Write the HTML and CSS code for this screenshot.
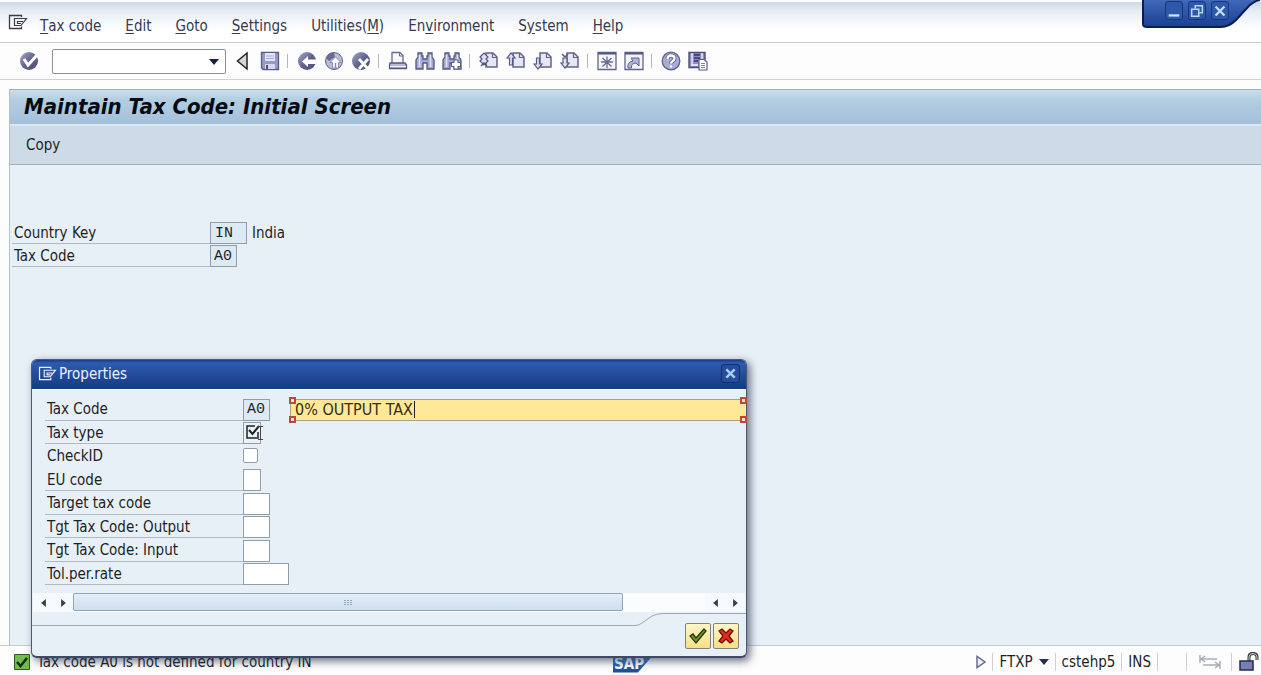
FILE: index.html
```html
<!DOCTYPE html>
<html lang="en">
<head>
    <meta charset="UTF-8">
    <meta name="viewport" content="width=device-width, initial-scale=1.0">
    <title>Maintain Tax Code: Initial Screen</title>
    <link rel="stylesheet" href="styles.css">
</head>
<body>
    <!-- shared shapes -->
    <svg class="defs" aria-hidden="true">
        <defs>
            <linearGradient id="ball" x1="0" y1="0" x2="1" y2="1">
                <stop offset="0" stop-color="#a9abd0"/>
                <stop offset="0.5" stop-color="#62648f"/>
                <stop offset="1" stop-color="#4b4c74"/>
            </linearGradient>
            <symbol id="session" viewBox="0 0 20 16">
                <path d="M13.500 3V1.500H1.500V14.500H13.500V12.500" fill="none" stroke="currentColor" stroke-width="1.300"/>
                <path d="M6.500 4.500H18.500L14.500 9.500L13 11.500H6.500ZM15 7.500H9.500V9.500H13" fill="none" stroke="currentColor" stroke-width="1.200"/>
            </symbol>
            <symbol id="page" viewBox="0 0 20 20">
                <path d="M7 2H14L18 6V16H7Z" fill="#e6e7f6" stroke="#62648c" stroke-width="1.500"/>
                <path d="M13.500 2V6.500H18" fill="none" stroke="#62648c" stroke-width="1.200"/>
            </symbol>
            <symbol id="binoculars" viewBox="0 0 20 20">
                <path d="M3 2H7V5H8V8H12V5H13V2H17V6L19 9V18H12V12H8V18H1V9L3 6Z" fill="#a4a8d4" stroke="#55577f" stroke-width="1.300"/>
                <path d="M4.500 4V16M15.500 4V16" stroke="#e4e5f6" stroke-width="1.500"/>
            </symbol>
        </defs>
    </svg>

    <!-- ============ menu ============ -->
    <nav class="menu-bar">
        <button class="menu-session" aria-label="Session"><svg width="20" height="16"><use href="#session"/></svg></button>
        <button><u>T</u>ax code</button>
        <button><u>E</u>dit</button>
        <button><u>G</u>oto</button>
        <button><u>S</u>ettings</button>
        <button>Utilities(<u>M</u>)</button>
        <button>En<u>v</u>ironment</button>
        <button>S<u>y</u>stem</button>
        <button><u>H</u>elp</button>
    </nav>

    <div class="window-controls">
        <svg class="window-tab" viewBox="0 0 120 29" aria-hidden="true">
            <defs>
                <linearGradient id="tab" x1="0" y1="0" x2="0" y2="1">
                    <stop offset="0" stop-color="#3f68b8"/>
                    <stop offset="1" stop-color="#1a3f94"/>
                </linearGradient>
            </defs>
            <path d="M2 0V24Q2 27 6 27H80Q88 27 95 20L106 8Q112 1 119 0Z" fill="url(#tab)"/>
            <path d="M2 0V24Q2 27 6 27H80Q88 27 95 20L106 8Q112 1 119 0" fill="none" stroke="#0b1d52" stroke-width="2"/>
        </svg>
        <button aria-label="Minimize"><svg viewBox="0 0 18 18"><path d="M3 14H15" stroke="#d3e4ff" stroke-width="2.500"/></svg></button>
        <button aria-label="Restore"><svg viewBox="0 0 18 18"><path d="M7 6V3H15V11H12M3 7H11V15H3Z" fill="none" stroke="#bcd5fb" stroke-width="1.700"/></svg></button>
        <button aria-label="Close"><svg viewBox="0 0 18 18"><path d="M4 4L14 14M14 4L4 14" stroke="#c8defd" stroke-width="2.500"/></svg></button>
    </div>

    <!-- ============ system toolbar ============ -->
    <div class="toolbar">
        <button aria-label="Enter"><svg viewBox="0 0 20 20"><circle cx="10" cy="10" r="9" fill="url(#ball)"/><path d="M5 8L9 14L19 3" fill="none" stroke="#fff" stroke-width="3"/></svg></button>
        <div class="command">
            <select aria-label="Command"><option></option></select>
            <svg width="10" height="6" viewBox="0 0 10 6"><path d="M0 0H10L5 6Z" fill="#17213f"/></svg>
        </div>
        <button aria-label="Collapse"><svg viewBox="0 0 20 20"><path d="M14 2V18L4.500 10Z" fill="#d8d8dc" stroke="#222" stroke-width="1.500"/></svg></button>
        <button aria-label="Save"><svg viewBox="0 0 20 20"><path d="M1.500 1.500H18.500V18.500H3L1.500 17Z" fill="#9599c8" stroke="#5a5c88" stroke-width="1.300"/><path d="M5 2H15V10H5Z" fill="#e4e6f8"/><path d="M6 5H14M6 7.500H14" stroke="#a8abd2"/><path d="M5 13H15V18H5Z" fill="#d6d8ef"/><path d="M7 14V18" stroke="#4d4f7b" stroke-width="2"/></svg></button>
        <span class="sep"></span>
        <button aria-label="Back"><svg viewBox="0 0 20 20"><circle cx="10" cy="10" r="9" fill="url(#ball)"/><path d="M5 10.500L11 5V8.500H19V13H11V16Z" fill="#fff"/></svg></button>
        <button aria-label="Exit"><svg viewBox="0 0 20 20"><circle cx="10" cy="10" r="8.500" fill="#b9bbdc" stroke="#606289"/><path d="M2 7Q5 1 10 2L11 6L5 10Z" fill="#696b96"/><path d="M11.500 6L17 11.500H14.500V17H8.500V11.500H6Z" fill="#fff" stroke="#777aa4" stroke-width="0.800"/><path d="M11.500 17V12" stroke="#8588b4" stroke-width="1.500"/></svg></button>
        <button aria-label="Cancel"><svg viewBox="0 0 20 20"><circle cx="10" cy="10" r="9" fill="url(#ball)"/><path d="M8 8L17 18M17 8L8 18" stroke="#fff" stroke-width="2.800"/></svg></button>
        <span class="sep"></span>
        <button aria-label="Print"><svg viewBox="0 0 20 20"><path d="M4 12V1.500H12L15 4.500V12" fill="#f7f7fc" stroke="#686a91" stroke-width="1.300"/><path d="M11.500 1.500V5H15" fill="none" stroke="#686a91"/><path d="M2 12H17L18.500 14V17.500H1.500V14Z" fill="#b6b8dc" stroke="#55577f" stroke-width="1.300"/><path d="M2 15.500H18" stroke="#f3f3fb"/></svg></button>
        <button aria-label="Find"><svg viewBox="0 0 20 20"><use href="#binoculars"/></svg></button>
        <button aria-label="Find next"><svg viewBox="0 0 20 20"><use href="#binoculars"/><path d="M14 8.500V18.500M9 13.500H19" stroke="#5b5d87" stroke-width="5"/><path d="M14 9.500V17.500M10 13.500H18" stroke="#fff" stroke-width="3"/></svg></button>
        <span class="sep"></span>
        <button aria-label="First page"><svg viewBox="0 0 20 20"><use href="#page"/><path d="M1 6L5 2L9 6L7 8L9 10L5 14L1 10L3 8Z" fill="#dddff3" stroke="#55577f" stroke-width="1.200"/><path d="M2 15L5 12L8 15" fill="none" stroke="#55577f" stroke-width="1.500"/></svg></button>
        <button aria-label="Previous page"><svg viewBox="0 0 20 20"><use href="#page"/><path d="M1 7L5 2L9 7H6.500V14H3.500V7Z" fill="#dddff3" stroke="#55577f" stroke-width="1.200"/></svg></button>
        <button aria-label="Next page"><svg viewBox="0 0 20 20"><use href="#page"/><path d="M1 13L5 18L9 13H6.500V7H3.500V13Z" fill="#dddff3" stroke="#55577f" stroke-width="1.200"/></svg></button>
        <button aria-label="Last page"><svg viewBox="0 0 20 20"><use href="#page"/><path d="M2 3L5 6L8 3" fill="none" stroke="#55577f" stroke-width="1.500"/><path d="M3 7H7V12H9L5 17L1 12H3Z" fill="#dddff3" stroke="#55577f" stroke-width="1.200"/></svg></button>
        <span class="sep"></span>
        <button aria-label="New session"><svg viewBox="0 0 20 20"><path d="M1 1.500H19V18.500H1Z" fill="#f4f4fb" stroke="#62648b" stroke-width="1.300"/><path d="M1 2.500H19" stroke="#55577f" stroke-width="2"/><path d="M10 5.500V17M4 11H16M5.500 7L14.500 15.500M14.500 7L5.500 15.500" stroke="#686b9a" stroke-width="1.300"/></svg></button>
        <button aria-label="Create shortcut"><svg viewBox="0 0 20 20"><path d="M1 1.500H19V18.500H1Z" fill="#f4f4fb" stroke="#62648b" stroke-width="1.300"/><path d="M1 2.500H19" stroke="#55577f" stroke-width="2"/><path d="M4 17Q3 11 9 10L7 7H15V15L12 12Q7 12 7.500 17Z" fill="#b0b3da" stroke="#5f628e"/></svg></button>
        <span class="sep"></span>
        <button aria-label="Help"><svg viewBox="0 0 20 20"><circle cx="10" cy="10" r="8.800" fill="#a9acd6" stroke="#5e608a" stroke-width="1.300"/><path d="M6.500 8Q6.500 4.500 10 4.500Q13.500 4.500 13.500 7.500Q13.500 9 11.500 10.200Q10 11 10 12.500" fill="none" stroke="#5e608a" stroke-width="4"/><path d="M6.500 8Q6.500 4.500 10 4.500Q13.500 4.500 13.500 7.500Q13.500 9 11.500 10.200Q10 11 10 12.500M10 14.500V16.500" fill="none" stroke="#fff" stroke-width="2.300"/></svg></button>
        <button aria-label="Customize layout"><svg viewBox="0 0 20 20"><path d="M1 1.500H17V16.500H1Z" fill="#8c90c5" stroke="#494b75" stroke-width="1.400"/><path d="M4 2V13M14 2V8" stroke="#e4e5f5" stroke-width="1.500"/><path d="M6 4H12M6 7H12M6 10H10" stroke="#484a79" stroke-width="2"/><path d="M3 14H10" stroke="#dfe1f4" stroke-width="2"/><path d="M11 8.500H16L19 11V19H11Z" fill="#fff" stroke="#5b5d83" stroke-width="1.200"/><path d="M13 12.500H17M13 14.500H17M13 16.500H17" stroke="#7f83ae"/></svg></button>
    </div>

    <!-- ============ work area ============ -->
    <main class="workspace">
        <h1>Maintain Tax Code: Initial Screen</h1>
        <div class="app-toolbar"><button>Copy</button></div>
        <form class="entry">
            <div class="row">
                <label for="country">Country Key</label>
                <input id="country" class="code size-3" value="IN" readonly>
                <span class="hint">India</span>
            </div>
            <div class="row">
                <label for="taxcode">Tax Code</label>
                <input id="taxcode" class="code size-2" value="A0" readonly>
            </div>
        </form>
    </main>

    <!-- ============ status bar ============ -->
    <footer class="status-bar">
        <svg width="16" height="16" viewBox="0 0 16 16"><path d="M0.500 0.500H15.500V15.500H0.500Z" fill="#70bd4a" stroke="#2c5925"/><path d="M3 8L6.500 12L13 4" fill="none" stroke="#123015" stroke-width="2.500"/></svg>
        <span class="message">Tax code A0 is not defined for country IN</span>
        <span class="logo">SAP</span>
        <div class="system-info">
            <button aria-label="Show fields"><svg width="10" height="14" viewBox="0 0 10 14"><path d="M1 1.500V12.500L9 7Z" fill="#eef1f8" stroke="#626d8b" stroke-width="1.500"/></svg></button>
            <button class="cell">FTXP <svg width="10" height="6" viewBox="0 0 10 6"><path d="M0 0H10L5 6Z" fill="#26304f"/></svg></button>
            <span class="cell">cstehp5</span>
            <span class="cell">INS</span>
            <span class="cell blank"></span>
            <span class="cell wide"><svg width="22" height="16" viewBox="0 0 22 16"><path d="M1 1V9M2 5H18M6 2L2 5L6 8M21 7V15M4 11H20M16 8L20 11L16 14" fill="none" stroke="#a9adb5" stroke-width="1.500"/></svg></span>
            <span class="cell lock"><svg width="20" height="20" viewBox="0 0 20 20"><path d="M10 9V5Q10 1.500 14 1.500Q18 1.500 18 5V8" fill="none" stroke="#35363e" stroke-width="3"/><path d="M10 9V5Q10 1.500 14 1.500Q18 1.500 18 5V8" fill="none" stroke="#c9cad4"/><path d="M1 9H14V18H1Z" fill="#777cba" stroke="#282b43" stroke-width="1.500"/></svg></span>
        </div>
    </footer>

    <!-- ============ properties popup ============ -->
    <section class="dialog" role="dialog" aria-labelledby="dialog-title">
        <header>
            <svg width="19" height="15"><use href="#session"/></svg>
            <h2 id="dialog-title">Properties</h2>
            <button aria-label="Close dialog"><svg viewBox="0 0 18 18"><path d="M4 4L14 14M14 4L4 14" stroke="#a9ccff" stroke-width="3"/></svg></button>
        </header>
        <form class="properties">
            <div class="row">
                <label for="p-code">Tax Code</label>
                <input id="p-code" class="code size-2" value="A0" readonly>
                <div class="description">
                    <input aria-label="Description" value="0% OUTPUT TAX">
                    <i class="handle top left"></i><i class="handle top right"></i>
                    <i class="handle bottom left"></i><i class="handle bottom right"></i>
                    <i class="caret"></i>
                </div>
            </div>
            <div class="row">
                <label for="p-type">Tax type</label>
                <div class="required">
                    <input id="p-type" class="size-1">
                    <svg width="20" height="18" viewBox="0 0 20 18"><path d="M14 9V15H3V3H11" fill="none" stroke="#222" stroke-width="1.500"/><path d="M5 7L8.500 11L15 3" fill="none" stroke="#222" stroke-width="2"/><path d="M14 3.500H19M16.500 4V16M14 16.500H19" stroke="#444" fill="none"/></svg>
                </div>
            </div>
            <div class="row plain">
                <label for="p-check">CheckID</label>
                <input id="p-check" type="checkbox">
            </div>
            <div class="row">
                <label for="p-eu">EU code</label>
                <input id="p-eu" class="size-1">
            </div>
            <div class="row">
                <label for="p-target">Target tax code</label>
                <input id="p-target" class="size-2">
            </div>
            <div class="row">
                <label for="p-output">Tgt Tax Code: Output</label>
                <input id="p-output" class="size-2">
            </div>
            <div class="row">
                <label for="p-input">Tgt Tax Code: Input</label>
                <input id="p-input" class="size-2">
            </div>
            <div class="row">
                <label for="p-tol">Tol.per.rate</label>
                <input id="p-tol" class="size-4">
            </div>
        </form>
        <div class="scroller">
            <button aria-label="Scroll left"><svg viewBox="0 0 6 10"><path d="M6 0V10L0 5Z"/></svg></button>
            <button aria-label="Scroll right"><svg viewBox="0 0 6 10"><path d="M0 0V10L6 5Z"/></svg></button>
            <div class="track"><div class="thumb"><svg width="8" height="5" viewBox="0 0 8 5"><path d="M0 0.500H2M3 0.500H5M6 0.500H8M0 2.500H2M3 2.500H5M6 2.500H8M0 4.500H2M3 4.500H5M6 4.500H8" stroke="#98a8ba"/></svg></div></div>
            <button aria-label="Scroll left"><svg viewBox="0 0 6 10"><path d="M6 0V10L0 5Z"/></svg></button>
            <button aria-label="Scroll right"><svg viewBox="0 0 6 10"><path d="M0 0V10L6 5Z"/></svg></button>
        </div>
        <div class="actions">
            <div class="edge"></div>
            <svg class="curve" width="26" height="13" viewBox="0 0 26 13"><path d="M0 12.500Q3 12 6 10L16 3Q20 1 26 0.500" fill="none" stroke="#a0a9b2"/></svg>
            <div class="buttons">
                <button aria-label="Continue"><svg viewBox="0 0 18 18"><path d="M1 9L4 7L7 11L15 2L17 4L7 16Z" fill="#6d9430" stroke="#263610" stroke-width="1.300"/></svg></button>
                <button aria-label="Cancel"><svg viewBox="0 0 18 18"><path d="M2 4L5 2L9 6L13 2L16 4L12 9L16 14L13 16L9 12L5 16L2 14L6 9Z" fill="#e52b20" stroke="#66150f" stroke-width="1.300"/></svg></button>
            </div>
        </div>
    </section>
</body>
</html>
```
FILE: styles.css
```css
* { margin: 0; padding: 0; box-sizing: border-box; }
body { display: flex; flex-direction: column; min-height: 100vh; position: relative; overflow: hidden; background: #fdfdfe; color: #1c1f24; font-family: "DejaVu Sans Condensed", "Noto Sans", sans-serif; font-size: 15px; line-height: 20px; }
button, input, select { font: inherit; color: inherit; }
button { display: flex; align-items: center; justify-content: center; background: none; border: 0; }
input, select { appearance: none; border: 1px solid #9aa3ac; border-radius: 0; background: #fff; outline: 0; }
svg { display: block; flex: none; }
.defs { position: absolute; width: 0; height: 0; }

/* menu */
.menu-bar { display: flex; align-items: center; gap: 24px; height: 43px; padding: 8px 8px 0; border-top: 2px solid #fff; border-bottom: 1px solid #c9cbcf; background: linear-gradient(#cdd9e8, #e8eef6 10px, #fff 28px); color: #343a50; }
.menu-bar u { text-underline-offset: 2px; }
.menu-session { margin-right: -12px; color: #3b3c45; align-self: flex-start; padding-top: 4px; }

.window-controls { position: absolute; top: 0; right: 0; width: 120px; height: 29px; display: flex; gap: 5px; padding: 1px 0 0 24px; }
.window-tab { position: absolute; top: 0; left: 0; width: 120px; height: 29px; }
.window-controls button { position: relative; width: 18px; height: 19px; border: 1px solid #173778; border-radius: 3px; background: #2e58aa; }
.window-controls button svg { width: 16px; height: 16px; }

/* toolbar */
.toolbar { display: flex; align-items: center; gap: 7px; height: 37px; padding-left: 19px; border-bottom: 1px solid #cfd1d5; background: #fdfdfe; }
.toolbar button svg { width: 20px; height: 20px; }
.command { position: relative; width: 174px; height: 25px; margin-left: 6px; }
.command select { width: 100%; height: 100%; border-color: #8b8f98; border-radius: 2px; }
.command svg { position: absolute; right: 7px; top: 10px; }
.sep { width: 3px; height: 14px; border-left: 1px solid #b4b6be; }

/* work area */
.workspace { flex: 1; margin: 9px 0 0 9px; border-left: 1px solid #b4c2d0; background: #e8f0f7; }
h1 { height: 37px; padding-left: 14px; border-top: 1px solid #9aaebf; border-bottom: 2px solid #dbe7f1; background: linear-gradient(#cbdeea, #b3cee1 10px, #a4bfda); color: #060b12; font-size: 22px; font-style: italic; font-weight: bold; line-height: 34px; }
.app-toolbar { display: flex; align-items: center; height: 39px; padding-left: 16px; border-bottom: 1px solid #9fb0c1; background: #cddae7; }
.entry { padding: 56px 0 0 2px; }
.row { display: flex; align-items: stretch; height: 23px; }
.row label { width: 198px; padding-left: 2px; border-bottom: 1px solid #b1bac3; line-height: 24px; white-space: nowrap; }
.row input { height: 22px; align-self: flex-end; padding-left: 4px; border-color: #929da8; }
.row .code { background: #dde9f4; font-family: "Liberation Mono", monospace; font-size: 15px; }
.row .size-1 { width: 18px; }
.row .size-2 { width: 27px; padding-left: 3px; }
.row .size-3 { width: 37px; }
.row .size-4 { width: 46px; }
.hint { padding-left: 5px; line-height: 24px; }

/* status bar */
.status-bar { display: flex; align-items: center; height: 30px; padding: 3px 0 0 14px; border-top: 1px solid #c2cbd5; }
.message { flex: none; width: 583px; padding-left: 7px; }
.logo { width: 40px; height: 17px; margin-top: 4px; padding-left: 1px; background: linear-gradient(#3a85c9, #124b94); clip-path: polygon(0 0, 100% 0, 62% 100%, 0 100%); color: #fff; font-size: 15px; font-weight: bold; line-height: 17px; }
.system-info { display: flex; align-items: center; margin-left: auto; }
.cell { display: flex; align-items: center; height: 18px; margin-left: 6px; padding-left: 6px; border-left: 1px solid #cdd0d6; }
.cell svg { margin-left: 6px; }
.blank { width: 29px; }
.wide { width: 45px; margin-left: 0; }
.lock { width: 30px; margin-left: 0; padding-left: 1px; }

/* popup */
.dialog { position: absolute; left: 31px; top: 359px; width: 716px; border: 1px solid #4d5874; border-bottom: 2px solid #3e4965; border-radius: 6px; background: #e8f0f7; box-shadow: 3px 3px 8px rgba(40, 50, 75, 0.7); }
.dialog header { display: flex; align-items: center; gap: 2px; height: 29px; padding: 0 6px 2px; border-radius: 5px 5px 0 0; background: linear-gradient(#173d85, #2d5baf 3px, #274f9f 12px, #163a82); color: #eaf1ff; }
h2 { flex: 1; font-size: 15px; font-weight: normal; }
.dialog header button { width: 19px; height: 19px; border: 1px solid #10306f; border-radius: 3px; background: #254d9b; }
.dialog header button svg { width: 15px; height: 15px; }
.properties { display: grid; grid-template-rows: repeat(8, minmax(0, 1fr)); height: 200px; padding: 7px 0 4px 13px; border-top: 1px solid #fff; }
.properties .row { height: auto; }
.description { position: relative; flex: 1; display: flex; margin-left: 20px; }
.description input { width: 100%; border-color: #a7a385; border-right: 0; background: #ffe998; color: #352e12; font-size: 16px; }
.handle { position: absolute; width: 7px; height: 7px; border: 2px solid #c0453a; background: #fbe4d8; }
.top { top: 0; }
.bottom { bottom: -2px; }
.left { left: -1px; }
.right { right: -1px; }
.caret { position: absolute; left: 124px; top: 4px; width: 1px; height: 17px; background: #222; }
.required { position: relative; display: flex; }
.required svg { position: absolute; left: 1px; top: 2px; }
.required input { background: #edf2f8; }
.row input[type="checkbox"] { width: 15px; height: 15px; align-self: center; border-radius: 2px; }
.plain label { border-bottom-color: transparent; }

.scroller { display: flex; height: 19px; margin: 4px 1px 1px; background: #f7fafd; }
.scroller button { width: 20px; }
.scroller button svg { width: 5px; height: 8px; fill: #36404d; }
.track { flex: 1; padding-right: 82px; background: #fbfcfe; }
.thumb { display: flex; align-items: center; justify-content: center; height: 18px; border: 1px solid #91a4b5; border-radius: 2px; background: linear-gradient(#e3eef8, #cedff0); }
.actions { display: flex; height: 43px; }
.edge { flex: 1; margin-top: 12px; border-top: 1px solid #a0a9b2; }
.buttons { display: flex; gap: 2px; width: 84px; padding: 9px 0 0 23px; border-top: 1px solid #a0a9b2; }
.buttons button { width: 26px; height: 26px; border: 1px solid #82827a; border-radius: 2px; background: linear-gradient(#fff6c9, #f8df83); }
.buttons button svg { width: 18px; height: 18px; }
```
